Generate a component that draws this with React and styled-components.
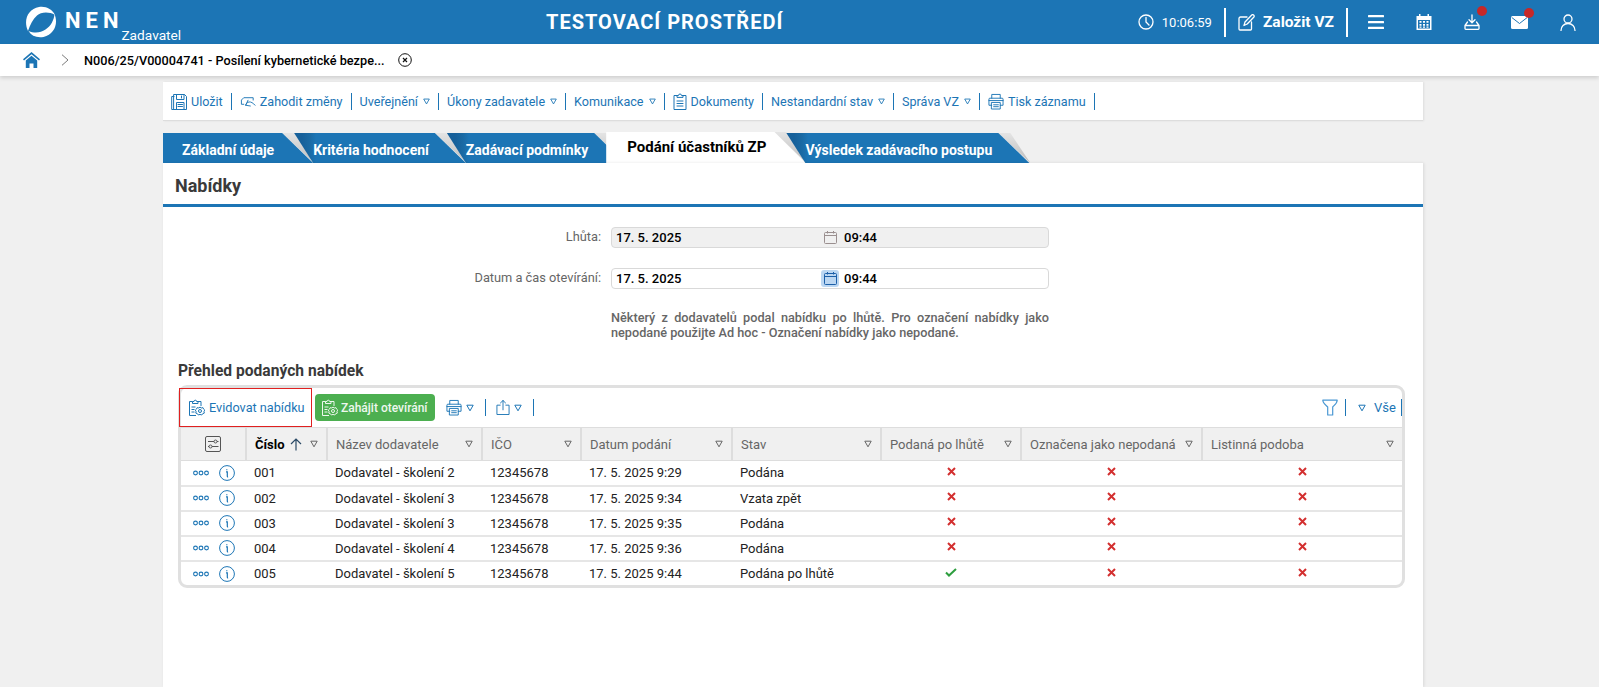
import React from "react";
import styled, { createGlobalStyle } from "styled-components";

const BLUE = "#1c75b5";

const Global = createGlobalStyle`
  html, body { margin: 0; padding: 0; height: 100%; overflow: hidden; background: #f0f0f0; }
  body { font-family: Roboto, "Liberation Sans", sans-serif; font-size: 13px; color: #222; }
  * { box-sizing: border-box; }
  svg { display: block; flex: none; }
`;

const Page = styled.div`
  height: 687px;
  display: flex;
  flex-direction: column;
  overflow: hidden;
`;
const TopBar = styled.header`
  height: 44px;
  background: ${BLUE};
  color: #fff;
  display: flex;
  align-items: center;
  flex: none;
`;
const Brand = styled.div`
  width: 546px;
  height: 100%;
  padding-left: 25px;
  display: flex;
  align-items: center;
  gap: 8px;
`;
const BrandName = styled.span`
  font-size: 22px;
  font-weight: 700;
  letter-spacing: 5px;
  line-height: 24px;
  margin-top: -2px;
`;
const BrandRole = styled.span`
  font-size: 13.7px;
  line-height: 16px;
  align-self: flex-end;
  margin: 0 0 1px -10px;
`;
const Title = styled.div`
  font-size: 20px;
  font-weight: 700;
  letter-spacing: 1px;
  white-space: nowrap;
`;
const TopRight = styled.div`
  margin-left: auto;
  display: flex;
  align-items: center;
  height: 100%;
  padding-right: 23px;
`;
const Clock = styled.span`
  font-size: 13px;
  margin-left: 8px;
  font-weight: 400;
`;
const TopSep = styled.i`
  width: 2px;
  height: 29px;
  background: #fff;
  margin: ${(p) => p.$m};
`;
const NewVz = styled.span`
  font-size: 15.5px;
  font-weight: 700;
  margin-left: 8px;
`;
const TopIcon = styled.span`
  position: relative;
  margin-left: ${(p) => p.$ml}px;
  display: block;
`;
const Badge = styled.i`
  position: absolute;
  left: 13px;
  top: -8px;
  width: 10px;
  height: 10px;
  border-radius: 50%;
  background: #c62828;
`;
const Crumbs = styled.nav`
  height: 32px;
  flex: none;
  background: #fff;
  display: flex;
  align-items: center;
  box-shadow: 0 2px 4px rgba(0, 0, 0, 0.14);
  padding-left: 23px;
  position: relative;
  z-index: 2;
`;
const HomeGap = styled.span`
  width: 21px;
`;
const CrumbText = styled.span`
  font-weight: 500;
  font-size: 12.7px;
  color: #000;
  margin: 0 13px 0 15px;
  white-space: nowrap;
`;
const Main = styled.main`
  width: 1260px;
  margin: 6px 0 0 163px;
  flex: 1;
  display: flex;
  flex-direction: column;
`;
const ActionBar = styled.div`
  height: 39px;
  flex: none;
  background: #fff;
  border-bottom: 1px solid #ddd;
  box-shadow: 1px 0 2px rgba(0, 0, 0, 0.08);
  display: flex;
  align-items: center;
  padding-left: 8px;
  color: ${BLUE};
  font-size: 12.6px;
  margin-bottom: 11px;
`;
const Action = styled.div`
  display: flex;
  align-items: center;
  gap: ${(p) => (p.$tight ? 5 : 4)}px;
  padding: 0 8px 0 ${(p) => (p.$first ? 0 : 8)}px;
  height: 17px;
  border-right: 1px solid ${BLUE};
  white-space: nowrap;
  line-height: 15px;
`;
const Tabs = styled.div`
  display: flex;
  align-items: flex-end;
  height: 31px;
  flex: none;
`;
const Tab = styled.div`
  position: relative;
  isolation: isolate;
  height: ${(p) => (p.$active ? 31 : 30)}px;
  margin-right: -19px;
  padding: ${(p) => (p.$active ? 0 : 3)}px ${(p) => (p.$first || p.$active ? 39 : 37)}px ${(p) => (p.$active ? 1 : 0)}px ${(p) => (p.$active ? 21 : 19)}px;
  display: flex;
  align-items: center;
  font-size: ${(p) => (p.$active ? 15 : 14)}px;
  font-weight: 700;
  white-space: nowrap;
  color: ${(p) => (p.$active ? "#000" : "#fff")};
  z-index: ${(p) => (p.$active ? 5 : p.$z)};
  &::before {
    content: "";
    position: absolute;
    inset: 0;
    z-index: -1;
    background: ${(p) =>
      p.$active ? "#fff" : p.$first ? BLUE : `linear-gradient(to right, #16609a 8px, #1a6aa4 16px, ${BLUE} 22px)`};
    clip-path: polygon(0 0, calc(100% - 31px) 0, 100% 100%, ${(p) => (p.$first || p.$active ? "0" : "19px")} 100%);
  }
  &::after {
    content: "";
    position: absolute;
    top: 0;
    bottom: 0;
    right: -1px;
    width: 32px;
    z-index: -2;
    background: linear-gradient(to bottom, #e4e4e4, #bdbdbd);
    clip-path: polygon(0 0, 12px 0, 100% 100%);
  }
`;
const Panel = styled.section`
  flex: 1;
  background: #fff;
  box-shadow: 1px 0 3px rgba(0, 0, 0, 0.1);
  position: relative;
  z-index: 6;
`;
const PanelHead = styled.h1`
  margin: 0;
  height: 44px;
  border-bottom: 3px solid ${BLUE};
  padding: 3px 0 0 12px;
  display: flex;
  align-items: center;
  font-size: 18px;
  font-weight: 700;
  color: #3a3a3a;
`;
const Form = styled.div`
  display: grid;
  grid-template-columns: 438px 438px;
  column-gap: 10px;
  row-gap: 20px;
  margin-top: 20px;
  align-items: center;
`;
const Label = styled.label`
  text-align: right;
  color: #666;
  font-size: 12.8px;
  margin-top: -2px;
`;
const Field = styled.div`
  height: 21px;
  border: 1px solid #d9d9d9;
  border-radius: 4px;
  background: ${(p) => (p.$disabled ? "#f0f0f0" : "#fff")};
  display: grid;
  grid-template-columns: 205px 23px 1fr;
  align-items: center;
  padding-left: 4px;
  color: #000;
  font-weight: 500;
  font-size: 13px;
`;
const CalWrap = styled.span`
  width: 18px;
  height: 17px;
  border-radius: 3px;
  display: flex;
  align-items: center;
  justify-content: center;
  background: ${(p) => (p.$on ? "#bcd7f2" : "transparent")};
`;
const Note = styled.p`
  grid-column: 2;
  margin: 1px 0 0;
  color: #666;
  font-weight: 500;
  font-size: 12.7px;
  line-height: 15px;
  text-align: justify;
`;
const SectionTitle = styled.h2`
  margin: 21px 0 0 15px;
  font-size: 15.6px;
  line-height: 20px;
  font-weight: 700;
  color: #3a3a3a;
`;
const GridBox = styled.div`
  margin: 4px 0 0 15px;
  width: 1227px;
  border: 3px solid #e0e0e0;
  border-radius: 9px;
  height: 203px;
  background: #fff;
`;
const GridBar = styled.div`
  height: 39px;
  display: flex;
  align-items: center;
  color: ${BLUE};
`;
const Highlight = styled.button`
  all: unset;
  box-sizing: border-box;
  width: 133px;
  height: 39px;
  margin: -1px 0 0 -2px;
  border: 1px solid #e02020;
  display: flex;
  align-items: center;
  gap: 4px;
  padding-left: 8px;
  font-size: 12.7px;
  color: ${BLUE};
`;
const GreenBtn = styled.button`
  all: unset;
  box-sizing: border-box;
  width: 120px;
  height: 27px;
  margin-left: 3px;
  border-radius: 4px;
  background: #4caf50;
  color: #eef7ee;
  font-weight: 500;
  font-size: 12px;
  display: flex;
  align-items: center;
  gap: 3px;
  padding-left: 6px;
`;
const IconGroup = styled.div`
  display: flex;
  align-items: center;
  gap: 4px;
  height: 17px;
  padding: 0 ${(p) => p.$pr}px 0 ${(p) => p.$pl}px;
  border-right: 1px solid ${BLUE};
`;
const BarRight = styled.div`
  margin-left: auto;
  display: flex;
  align-items: center;
  font-size: 13px;
`;
const AllBtn = styled.div`
  display: flex;
  align-items: center;
  gap: 8px;
  height: 17px;
  padding: 0 2px 0 12px;
  width: 56px;
  border-right: 1px solid ${BLUE};
`;
const Table = styled.table`
  border-collapse: collapse;
  table-layout: fixed;
  width: 1221px;
  font-size: 13px;
`;
const Th = styled.th`
  height: 33px;
  background: #f0f0f0;
  border-top: 1px solid #ddd;
  border-bottom: 1px solid #ddd;
  border-right: 2px solid #ddd;
  font-weight: 400;
  color: #666;
  text-align: left;
  padding: 0 8px;
  &:last-child { border-right: 0; }
`;
const ThInner = styled.div`
  display: flex;
  align-items: center;
  justify-content: ${(p) => (p.$center ? "center" : "space-between")};
  white-space: nowrap;
`;
const SortName = styled.span`
  display: flex;
  align-items: center;
  gap: 5px;
  color: #000;
  font-weight: 700;
`;
const Td = styled.td`
  height: 25px;
  border-bottom: 2px solid #e6e6e6;
  padding: 0 8px;
  color: #222;
  white-space: nowrap;
  tr:last-child & { border-bottom: 0; }
`;
const RowIcons = styled.div`
  display: flex;
  align-items: center;
  gap: 10px;
  padding-left: 4px;
`;
const Mark = styled.span`
  display: flex;
  justify-content: center;
  margin-bottom: 3px;
`;

const Tri = ({ c = BLUE, s = 7 }) => (
  <svg width={s} height={s} viewBox="0 0 8 8" fill="none">
    <path d="M.8 1.200h6.400L4 6.800z" stroke={c} strokeWidth="1" strokeLinejoin="round" />
  </svg>
);

const Logo = () => (
  <svg width="32" height="32" viewBox="0 0 32 32" fill="#fff">
    <path d="M3 25C-2 14 3 3 14 1c7-1 13 2 16 8-6-3.500-14-3-18 .5C8 13 5 19 3 25z" />
    <path d="M29.500 8c4 10 0 20-11 23-7 1-12-1-15-6 6 2.500 12 2 17-1.500C26 20 29 14 29.500 8z" />
  </svg>
);
const W = { fill: "none", stroke: "#fff", strokeWidth: 1.3, strokeLinecap: "round", strokeLinejoin: "round" };
const B = { fill: "none", stroke: BLUE, strokeWidth: 1, strokeLinejoin: "round", strokeLinecap: "round" };

const ClockIcon = () => (
  <svg width="16" height="16" viewBox="0 0 16 16" {...W}><circle cx="8" cy="8" r="7" /><path d="M8 3.500V8l3 3" /></svg>
);
const EditIcon = () => (
  <svg width="17" height="17" viewBox="0 0 17 17" {...W}><path d="M9 3H2.500A1.500 1.500 0 0 0 1 4.500V15a1 1 0 0 0 1 1h10.500a1 1 0 0 0 1-1V8" /><path d="M6 11.500l1-3.500 6.500-6.800a1.300 1.300 0 0 1 2.200 2L9.200 10z" /></svg>
);
const MenuIcon = () => (
  <svg width="16" height="14" viewBox="0 0 16 14" fill="#fff"><rect y="0" width="16" height="2.200" rx=".5" /><rect y="6" width="16" height="2.200" rx=".5" /><rect y="11.800" width="16" height="2.200" rx=".5" /></svg>
);
const CalTop = () => (
  <svg width="16" height="16" viewBox="0 0 16 16" fill="#fff"><path d="M3 0h1.500v2h7V0H13v2h2.500v14H.5V2H3zM2 6v8.500h12V6z" /><path d="M3.500 7h2v1.800h-2zm3.500 0h2v1.800H7zm3.500 0h2v1.800h-2zM3.500 10h2v1.800h-2zM7 10h2v1.800H7zm3.500 0h2v1.800h-2zM3.500 12.500h2v1.200h-2zm3.500 0h2v1.200H7zm3.500 0h2v1.200h-2z" /></svg>
);
const TrayIcon = () => (
  <svg width="16" height="16" viewBox="0 0 16 16" {...W}><path d="M8 .8v7.700M5 5.800 8 8.800l3-3" /><path d="M3.500 8 1 11.500v3a.8.8 0 0 0 .8.800h12.400a.8.8 0 0 0 .8-.8v-3H1M12.500 8 15 11.500" /></svg>
);
const MailIcon = () => (
  <svg width="17" height="13" viewBox="0 0 17 13"><rect width="17" height="13" rx="1.500" fill="#fff" /><path d="M.8 1.500 8.500 7.500l7.700-6" fill="none" stroke={BLUE} strokeWidth="1" /></svg>
);
const UserIcon = () => (
  <svg width="16" height="17" viewBox="0 0 16 17" {...W}><circle cx="8" cy="5" r="4" /><path d="M1 16.500c0-4 3-7 7-7s7 3 7 7" /></svg>
);
const Home = () => (
  <svg width="17" height="16" viewBox="0 0 17 16" fill={BLUE}><path d="M8.500 0 17 7.300l-1 1.200-7.500-6.300L1 8.500 0 7.300z" /><path d="M2.800 8.500 8.500 3.700l5.700 4.800V16h-3.700v-4.500h-4V16H2.800z" /></svg>
);
const Chevron = () => (
  <svg width="8" height="12" viewBox="0 0 8 12" fill="none" stroke="#7a7a7a" strokeWidth="1"><path d="m1 .7 6 5.300-6 5.300" /></svg>
);
const CloseCircle = () => (
  <svg width="14" height="14" viewBox="0 0 14 14" fill="none" stroke="#111" strokeWidth="1"><circle cx="7" cy="7" r="6.300" /><path d="m5 5 4 4m0-4-4 4" strokeWidth="1.200" /></svg>
);
const SaveIcon = () => (
  <svg width="16" height="17" viewBox="0 0 16 17" {...B}><path d="M3 1.500h10.500l2 2v13H3z" /><path d="M3 3.500H.7v13H3" /><path d="M5.500 1.500v5h7.500v-5M10.500 3v2" /><path d="M5.500 16.500v-7H13v7M7 11.500h4.500M7 13.500h4.500" /></svg>
);
const UndoIcon = () => (
  <svg width="16" height="12" viewBox="0 0 17 12" {...B}><path d="M14 5V2.500H4L1.500 5v4.500H4" /><path d="M6 10.500C7 6.500 11.500 5 16 10.500M8.500 5.200 6 10.500l5 .8" /></svg>
);
const DocIcon = () => (
  <svg width="14" height="17" viewBox="0 0 14 17" {...B}><path d="M4 2.500H1v14h12v-14h-3" /><path d="M4 4V2.500h1.500a1.500 1.500 0 0 1 3 0H10V4z" /><path d="M4 8h6M4 10.500h6M4 13h6" /></svg>
);
const PrintIcon = () => (
  <svg width="16" height="17" viewBox="0 0 17 17" {...B}><path d="M4 5V1h9v4" /><path d="M4 12.500H1V6a1 1 0 0 1 1-1h13a1 1 0 0 1 1 1v6.500h-3" /><path d="M4 9.500h9v7H4zM1 7.500h15M6 12h5M6 14h5" /></svg>
);
const OfferIcon = ({ c = BLUE }) => (
  <svg width="17" height="17" viewBox="0 0 17 17" fill="none" stroke={c} strokeWidth="1" strokeLinejoin="round"><path d="M4.500 2.500H1.500v14H8M10 2.500h3V7" /><path d="M4.500 4.500v-2H6a1.300 1.300 0 0 1 2.600 0H10v2zM3.500 8h4M3.500 10.500h3M3.500 13h3" /><circle cx="12" cy="12" r="1.500" /><path d="M12 8l1.200 1 1.700-.4.700 1.500 1.200 1-.8 1.400.3 1.600-1.600.6-1 1.300-1.700-.6-1.600.6-1-1.300-1.600-.6.300-1.600-.8-1.400 1.200-1 .7-1.500 1.700.4z" /></svg>
);
const ShareIcon = () => (
  <svg width="14" height="17" viewBox="0 0 15 17" {...B}><path d="M4.500 6H1v10h13V6h-3.500" /><path d="M7.500 11V1M4.800 3.600 7.500 1l2.700 2.600" /></svg>
);
const FilterIcon = () => (
  <svg width="16" height="17" viewBox="0 0 16 17" fill="none" stroke="#4a98d3" strokeWidth="1.200" strokeLinejoin="round"><path d="M.8 1.200h14.400c0 3-3 5-4.500 6.800v8h-5V8C4 6.200.8 4.200.8 1.200z" /></svg>
);
const SlidersIcon = () => (
  <svg width="16" height="16" viewBox="0 0 16 16" fill="none" stroke="#555" strokeWidth="1"><rect x=".5" y=".5" width="15" height="15" rx="1.500" /><path d="M3 5.500h6M12 5.500h1.500M3 10.500h1M7 10.500h6.500" /><circle cx="10.500" cy="5.500" r="1.500" /><circle cx="5.500" cy="10.500" r="1.500" /></svg>
);
const ArrowUp = () => (
  <svg width="12" height="13" viewBox="0 0 12 13" fill="none" stroke="#2a4a66" strokeWidth="1.200"><path d="M6 12.500V1M1 6l5-5 5 5" /></svg>
);
const Dots = () => (
  <svg width="16" height="6" viewBox="0 0 16 6" fill="none" stroke={BLUE} strokeWidth="1.100"><circle cx="2.500" cy="3" r="1.900" /><circle cx="8" cy="3" r="1.900" /><circle cx="13.500" cy="3" r="1.900" /></svg>
);
const Info = () => (
  <svg width="16" height="16" viewBox="0 0 16 16" fill="none" stroke={BLUE} strokeWidth="1"><circle cx="8" cy="8" r="7.400" /><path d="M7 6.800h1.300v4.500c0 .5.300.7.800.6M7.800 4.200v1" strokeWidth="1.200" /></svg>
);
const Cross = () => (
  <svg width="9" height="9" viewBox="0 0 9 9" stroke="#d32f2f" strokeWidth="2"><path d="m1 1 7 7m0-7-7 7" /></svg>
);
const Check = () => (
  <svg width="12" height="9" viewBox="0 0 12 9" fill="none" stroke="#2e9e3f" strokeWidth="2"><path d="m1 4.500 3 3 7-6.500" /></svg>
);
const SmallCal = ({ c }) => (
  <svg width="13" height="13" viewBox="0 0 13 13" fill="none" stroke={c} strokeWidth="1"><rect x=".5" y="1.500" width="12" height="11" rx="1" /><path d="M.5 4.500h12M3.500 0v2.500M9.500 0v2.500" /></svg>
);

const actions = [
  { icon: <SaveIcon />, label: "Uložit", first: true },
  { icon: <UndoIcon />, label: "Zahodit změny" },
  { label: "Uveřejnění", tri: true },
  { label: "Úkony zadavatele", tri: true },
  { label: "Komunikace", tri: true },
  { icon: <DocIcon />, label: "Dokumenty" },
  { label: "Nestandardní stav", tri: true },
  { label: "Správa VZ", tri: true },
  { icon: <PrintIcon />, label: "Tisk záznamu" },
];
const tabs = ["Základní údaje", "Kritéria hodnocení", "Zadávací podmínky", "Podání účastníků ZP", "Výsledek zadávacího postupu"];
const cols = [65, 81, 155, 99, 151, 149, 140, 181, 200];
const heads = ["Název dodavatele", "IČO", "Datum podání", "Stav", "Podaná po lhůtě", "Označena jako nepodaná", "Listinná podoba"];
const rows = [
  ["001", "Dodavatel - školení 2", "17. 5. 2025 9:29", "Podána", false],
  ["002", "Dodavatel - školení 3", "17. 5. 2025 9:34", "Vzata zpět", false],
  ["003", "Dodavatel - školení 3", "17. 5. 2025 9:35", "Podána", false],
  ["004", "Dodavatel - školení 4", "17. 5. 2025 9:36", "Podána", false],
  ["005", "Dodavatel - školení 5", "17. 5. 2025 9:44", "Podána po lhůtě", true],
];

export default function App() {
  return (
    <Page>
      <Global />
      <TopBar>
        <Brand>
          <Logo />
          <BrandName>NEN</BrandName>
          <BrandRole>Zadavatel</BrandRole>
        </Brand>
        <Title>TESTOVACÍ PROSTŘEDÍ</Title>
        <TopRight>
          <ClockIcon />
          <Clock>10:06:59</Clock>
          <TopSep $m="0 12px 0 12px" />
          <EditIcon />
          <NewVz>Založit VZ</NewVz>
          <TopSep $m="0 0 0 12px" />
          <TopIcon $ml={20}><MenuIcon /></TopIcon>
          <TopIcon $ml={32}><CalTop /></TopIcon>
          <TopIcon $ml={32}><TrayIcon /><Badge /></TopIcon>
          <TopIcon $ml={31}><MailIcon /><Badge /></TopIcon>
          <TopIcon $ml={32}><UserIcon /></TopIcon>
        </TopRight>
      </TopBar>
      <Crumbs>
        <Home />
        <HomeGap />
        <Chevron />
        <CrumbText>N006/25/V00004741 - Posílení kybernetické bezpe...</CrumbText>
        <CloseCircle />
      </Crumbs>
      <Main>
        <ActionBar>
          {actions.map((a) => (
            <Action key={a.label} $first={a.first} $tight={a.tri}>
              {a.icon}
              {a.label}
              {a.tri && <Tri />}
            </Action>
          ))}
        </ActionBar>
        <Tabs>
          {tabs.map((t, i) => (
            <Tab key={t} $first={i === 0} $active={i === 3} $z={i + 1}>{t}</Tab>
          ))}
        </Tabs>
        <Panel>
          <PanelHead>Nabídky</PanelHead>
          <Form>
            <Label>Lhůta:</Label>
            <Field $disabled>
              <span>17. 5. 2025</span>
              <CalWrap><SmallCal c="#9a8f8f" /></CalWrap>
              <span>09:44</span>
            </Field>
            <Label>Datum a čas otevírání:</Label>
            <Field>
              <span>17. 5. 2025</span>
              <CalWrap $on><SmallCal c="#1c5fa8" /></CalWrap>
              <span>09:44</span>
            </Field>
            <Note>Některý z dodavatelů podal nabídku po lhůtě. Pro označení nabídky jako nepodané použijte Ad hoc - Označení nabídky jako nepodané.</Note>
          </Form>
          <SectionTitle>Přehled podaných nabídek</SectionTitle>
          <GridBox>
            <GridBar>
              <Highlight><OfferIcon />Evidovat nabídku</Highlight>
              <GreenBtn><OfferIcon c="#eef7ee" />Zahájit otevírání</GreenBtn>
              <IconGroup $pl={11} $pr={11}><PrintIcon /><Tri s={8} /></IconGroup>
              <IconGroup $pl={10} $pr={11}><ShareIcon /><Tri s={8} /></IconGroup>
              <BarRight>
                <IconGroup $pl={0} $pr={7}><FilterIcon /></IconGroup>
                <AllBtn><Tri s={8} />Vše</AllBtn>
              </BarRight>
            </GridBar>
            <Table>
              <colgroup>{cols.map((w, i) => <col key={i} style={{ width: w }} />)}</colgroup>
              <thead>
                <tr>
                  <Th><ThInner $center><SlidersIcon /></ThInner></Th>
                  <Th><ThInner><SortName>Číslo <ArrowUp /></SortName><Tri c="#666" s={8} /></ThInner></Th>
                  {heads.map((h) => <Th key={h}><ThInner>{h}<Tri c="#666" s={8} /></ThInner></Th>)}
                </tr>
              </thead>
              <tbody>
                {rows.map((r) => (
                  <tr key={r[0]}>
                    <Td><RowIcons><Dots /><Info /></RowIcons></Td>
                    <Td>{r[0]}</Td>
                    <Td>{r[1]}</Td>
                    <Td>12345678</Td>
                    <Td>{r[2]}</Td>
                    <Td>{r[3]}</Td>
                    <Td><Mark>{r[4] ? <Check /> : <Cross />}</Mark></Td>
                    <Td><Mark><Cross /></Mark></Td>
                    <Td><Mark><Cross /></Mark></Td>
                  </tr>
                ))}
              </tbody>
            </Table>
          </GridBox>
        </Panel>
      </Main>
    </Page>
  );
}
